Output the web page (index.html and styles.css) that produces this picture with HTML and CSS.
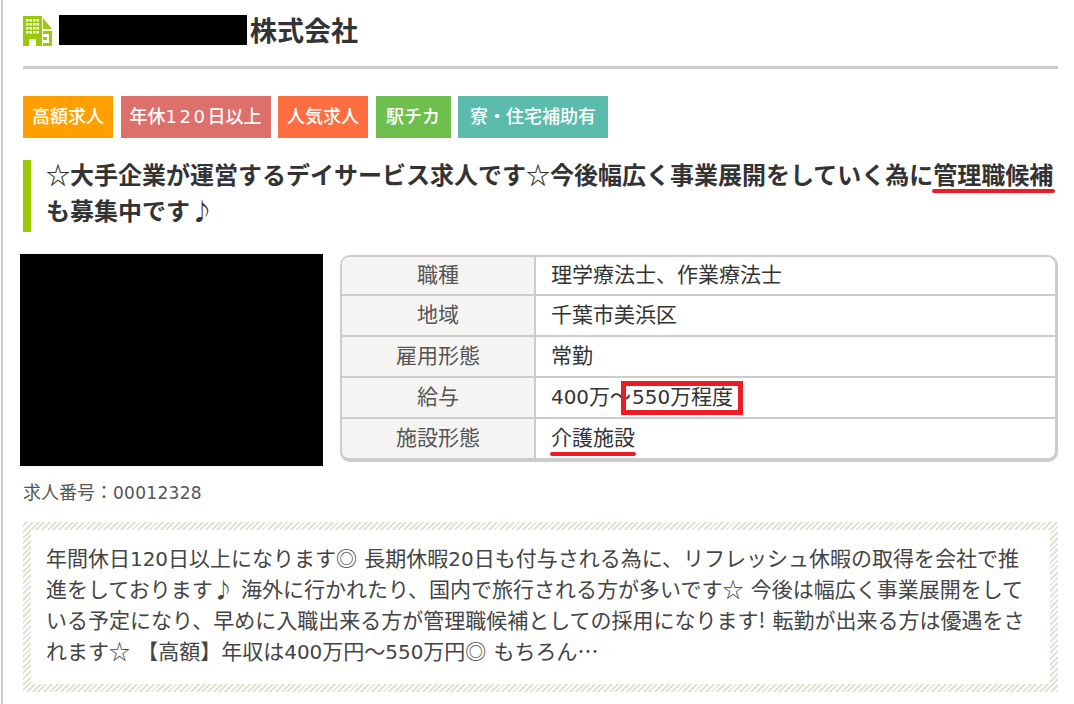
FILE: index.html
```html
<!DOCTYPE html>
<html lang="ja">
<head>
<meta charset="utf-8">
<title>求人</title>
<link rel="stylesheet" href="styles.css">
</head>
<body>
<main class="page">
  <header class="company">
    <svg class="company-icon" width="30" height="30" viewBox="0 0 30 30" aria-hidden="true">
      <path fill="#99cc00" fill-rule="evenodd" d="M0 0H19V30H13V23H6V30H0ZM3 3v2.500h2.500V3zM6.500 3v2.500H9V3zM10 3v2.500h2.500V3zM13.500 3v2.500H16V3zM3 7v2.500h2.500V7zM6.500 7v2.500H9V7zM10 7v2.500h2.500V7zM13.500 7v2.500H16V7zM3 11v2.500h2.500V11zM6.500 11v2.500H9V11zM10 11v2.500h2.500V11zM13.500 11v2.500H16V11zM3 15v2.500h2.500V15zM6.500 15v2.500H9V15zM10 15v2.500h2.500V15zM13.500 15v2.500H16V15z"/>
      <path fill="#99cc00" d="M20 2L29 13H20ZM20 15H29V30H20V27H26V18H20ZM20 21H24V24H20Z"/>
    </svg>
    <div class="company-name"><span class="masked"></span><span>株式会社</span></div>
  </header>

  <ul class="tags">
    <li class="tag tag-orange">高額求人</li>
    <li class="tag tag-rose">年休<span class="tag-num">120</span>日以上</li>
    <li class="tag tag-coral">人気求人</li>
    <li class="tag tag-green">駅チカ</li>
    <li class="tag tag-teal">寮・住宅補助有</li>
  </ul>

  <h2 class="headline"><span class="headline-text">☆大手企業が運営するデイサービス求人です☆今後幅広く事業展開をしていく為に<span class="underlined under-headline">管理職候補</span>も募集中です♪</span></h2>

  <section class="summary">
    <div class="photo"></div>
    <table class="facts">
      <tr><th>職種</th><td>理学療法士、作業療法士</td></tr>
      <tr><th>地域</th><td>千葉市美浜区</td></tr>
      <tr><th>雇用形態</th><td>常勤</td></tr>
      <tr><th>給与</th><td><span class="num">400</span>万～<span class="boxed"><span class="num">550</span>万程度</span></td></tr>
      <tr><th>施設形態</th><td><span class="underlined under-cell">介護施設</span></td></tr>
    </table>
  </section>

  <p class="job-number">求人番号：<span class="job-digits">00012328</span></p>

  <div class="stripe-box">
    <p class="description">年間休日<span class="num">120</span>日以上になります◎ 長期休暇<span class="num">20</span>日も付与される為に、リフレッシュ休暇の取得を会社で推進をしております♪ 海外に行かれたり、国内で旅行される方が多いです☆ 今後は幅広く事業展開をしている予定になり、早めに入職出来る方が管理職候補としての採用になります! 転勤が出来る方は優遇をされます☆ 【高額】年収は<span class="num">400</span>万円～<span class="num">550</span>万円◎ もちろん…</p>
  </div>
</main>
</body>
</html>
```

FILE: styles.css
```css
* { box-sizing: border-box; }
html, body { margin: 0; padding: 0; background: #fff; }
body {
  padding-left: 1px;
  font-family: "Noto Sans CJK JP", "Noto Sans", sans-serif;
  color: #333;
  overflow: hidden;
}
.page {
  width: 1073px;
  height: 704px;
  border-left: 2px solid #ccc;
  padding: 15px 16px 0 20px;
  overflow: hidden;
}
.num { font-family: "DejaVu Sans", sans-serif; font-size: .95em; line-height: 1; }
.company {
  display: flex;
  align-items: flex-start;
  height: 54px;
  gap: 6px;
  border-bottom: 3px solid #ccc;
}
.company-icon { flex: none; margin-top: 1px; }
.company-name {
  display: flex;
  align-items: flex-start;
  font-size: 27px;
  font-weight: 700;
  line-height: 30px;
  color: #333;
}
.masked { display: block; width: 188px; height: 30px; background: #000; margin-right: 3px; }
.tags {
  display: flex;
  gap: 7.5px;
  list-style: none;
  margin: 27px 0 0;
  padding: 0;
}
.tag {
  height: 42px;
  padding: 0 9px;
  font-size: 18px;
  line-height: 38px;
  color: #fff;
  font-weight: 500;
  white-space: nowrap;
}
.tag-num { font-family: "DejaVu Sans", sans-serif; font-size: 18px; line-height: 1; letter-spacing: 2.550px; }
.tag-orange { background: #ffa000; }
.tag-rose { background: #de706b; }
.tag-coral { background: #ff6e40; }
.tag-green { background: #6fbf4f; padding: 0 10.500px; }
.tag-teal { background: #5bbcad; padding: 0 12px; }
.headline {
  display: flow-root;
  margin: 22px 0 0;
  height: 72px;
  border-left: 8px solid #99cc00;
  padding-left: 15px;
  font-size: 24px;
  font-weight: 700;
  line-height: 36px;
  color: #333;
}
.headline-text { display: block; margin-top: -4px; }
.underlined { position: relative; }
.underlined::after {
  content: "";
  position: absolute;
  background: #ed1c24;
  border-radius: 2px;
  height: 4px;
}
.under-headline::after { left: -1px; right: -2px; bottom: -2px; }
.under-cell::after { left: -1px; right: -1px; bottom: -5px; }
.summary {
  display: flex;
  align-items: flex-start;
  margin: 22px 0 0 -3px;
  gap: 17px;
}
.photo { flex: none; width: 303px; height: 212px; background: #000; }
.facts {
  flex: none;
  width: 718px;
  margin-top: 1px;
  border: 2px solid #ccc;
  border-right-width: 3px;
  border-bottom-width: 4px;
  border-radius: 10px;
  border-spacing: 0;
  border-collapse: separate;
  table-layout: fixed;
  overflow: hidden;
  font-size: 21px;
}
.facts th, .facts td {
  height: 41px;
  padding: 0 0 6px;
  font-weight: 400;
  line-height: 30px;
  border-top: 2px solid #ccc;
}
.facts tr:first-child th, .facts tr:first-child td { border-top: 0; height: 37px; }
.facts th {
  width: 194px;
  background: #f5f4f2;
  color: #555;
  text-align: center;
  border-right: 2px solid #ccc;
}
.facts td { padding-left: 15px; color: #333; }
.boxed { position: relative; margin-left: 1px; }
.boxed::after {
  content: "";
  position: absolute;
  left: -11px;
  right: -10px;
  top: 1px;
  bottom: -5px;
  border: 5px solid #ed1c24;
}
.job-number {
  margin: 14px 0 0;
  font-size: 18px;
  line-height: 22px;
  color: #555;
}
.job-digits { font-family: "DejaVu Sans", sans-serif; font-size: 17px; line-height: 1; letter-spacing: .3px; }
.stripe-box {
  margin-top: 20px;
  padding: 8px;
  height: 170px;
  background: repeating-linear-gradient(-45deg, #e2e3d6 0, #e2e3d6 2px, #fff 2px, #fff 4px);
}
.description {
  margin: 0;
  height: 100%;
  padding: 12px 15px;
  background: #fff;
  font-size: 21px;
  line-height: 31px;
  word-spacing: 2.500px;
  color: #444;
}
```
